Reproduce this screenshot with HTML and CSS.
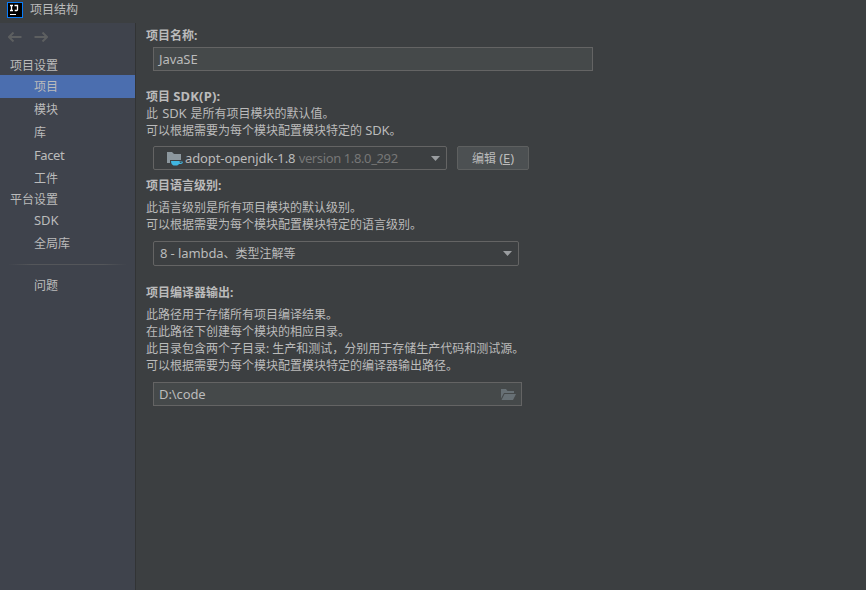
FILE: index.html
```html
<!DOCTYPE html>
<html lang="zh-CN">
  <head>
    <meta charset="UTF-8" />
    <meta name="viewport" content="width=device-width, initial-scale=1.0" />
    <title>项目结构</title>
    <link rel="stylesheet" href="styles.css">
  </head>
  <body>
    <header class="titlebar">
      <svg class="logo" width="16" height="16" viewBox="0 0 16 16">
        <rect x="0.5" y="0.5" width="15" height="15" fill="#000" stroke="#087cfa" />
        <path d="M3 3.500h3M4.500 3.500v5M3 8.500h3M7.500 3.500h3v4.200q0 .8-.8.8h-2" fill="none" stroke="#fff" stroke-width="1.300" />
        <path d="M3 12.500h6" stroke="#fff" stroke-width="1" />
      </svg>
      <span>项目结构</span>
    </header>

    <div class="window">
      <nav class="sidebar">
        <div class="history">
          <svg width="14" height="10" viewBox="0 0 14 10"><path d="M13.500 5H1.500M5.500 .5L1 5l4.500 4.500" /></svg>
          <svg width="14" height="10" viewBox="0 0 14 10"><path d="M.5 5h12M8.500 .5L13 5 8.500 9.500" /></svg>
        </div>
        <div class="group">项目设置</div>
        <a class="item selected">项目</a>
        <a class="item">模块</a>
        <a class="item">库</a>
        <a class="item"><span class="en facet">Facet</span></a>
        <a class="item">工件</a>
        <div class="group">平台设置</div>
        <a class="item"><span class="en">SDK</span></a>
        <a class="item">全局库</a>
        <div class="separator"></div>
        <a class="item">问题</a>
      </nav>

      <main class="content">
        <section class="block name">
          <h2>项目名称:</h2>
          <div class="field project-name"><span class="en">JavaSE</span></div>
        </section>

        <section class="block sdk">
          <h2>项目 <span class="en">SDK(P):</span></h2>
          <p>此 <span class="en sdk-word">SDK</span> 是所有项目模块的默认值。</p>
          <p>可以根据需要为每个模块配置模块特定的 <span class="en">SDK</span>。</p>
          <div class="row">
            <div class="combo sdk-combo">
              <svg class="folder" width="16" height="14" viewBox="0 0 16 14">
                <path d="M0 0h5l2 2h7v6H3v3H0z" fill="#8c979e" />
                <path d="M4 9h8.500v.5H15q1 0 .8 1-.3 1.500-3.800 1.500-.7 1-2 1.500H6.500Q4 12.500 4 9z" fill="#40b6e0" />
                <path d="M12.800 10.500h1.700" stroke="#3c3f41" stroke-width=".8" />
              </svg>
              <span class="en">adopt-openjdk-1.8 <span class="version">version 1.8.0_292</span></span>
              <svg class="arrow" width="9" height="5" viewBox="0 0 9 5"><path d="M0 0h9L4.500 5z" /></svg>
            </div>
            <button class="edit">编辑 <span class="en">(<u>E</u>)</span></button>
          </div>
        </section>

        <section class="block level">
          <h2>项目语言级别:</h2>
          <p>此语言级别是所有项目模块的默认级别。</p>
          <p>可以根据需要为每个模块配置模块特定的语言级别。</p>
          <div class="combo level-combo">
            <span><span class="en">8 - lambda</span>、类型注解等</span>
            <svg class="arrow" width="9" height="5" viewBox="0 0 9 5"><path d="M0 0h9L4.500 5z" /></svg>
          </div>
        </section>

        <section class="block output">
          <h2>项目编译器输出:</h2>
          <p>此路径用于存储所有项目编译结果。</p>
          <p>在此路径下创建每个模块的相应目录。</p>
          <p>此目录包含两个子目录: 生产和测试，分别用于存储生产代码和测试源。</p>
          <p>可以根据需要为每个模块配置模块特定的编译器输出路径。</p>
          <div class="field path">
            <span class="en">D:\code</span>
            <svg width="15" height="11" viewBox="0 0 15 11">
              <path d="M0 0h5l1.500 2H13v2H3L0 9.500zM3.500 5H15l-3 6H.5z" fill="#677075" />
            </svg>
          </div>
        </section>
      </main>
    </div>
  </body>
</html>
```

FILE: styles.css
```css
* {
  box-sizing: border-box;
}

body {
  margin: 0;
  height: 100vh;
  display: flex;
  flex-direction: column;
  overflow: hidden;
  background: #3c3f41;
  color: #bbbbbb;
  font-family: "Noto Sans", "Noto Sans CJK SC", sans-serif;
  font-size: 12px;
  line-height: 17px;
}

.en {
  font-size: 13px;
  letter-spacing: -0.1px;
}

.titlebar {
  height: 23px;
  padding: 1px 7px 5px;
  display: flex;
  align-items: center;
  gap: 7px;
}

.window {
  flex: 1;
  display: flex;
}

/* sidebar */
.sidebar {
  width: 136px;
  background: #3f434c;
  border-right: 1px solid #323435;
}

.history {
  height: 34px;
  padding: 9px 8px 0;
  display: flex;
  gap: 12px;
}

.history path {
  fill: none;
  stroke: #5d5f60;
  stroke-width: 2;
}

.group {
  height: 19px;
  padding-left: 10px;
  line-height: 20px;
}

.history + .group {
  height: 18px;
  line-height: 17px;
}

.item {
  display: block;
  height: 23px;
  padding-left: 34px;
  line-height: 23px;
}

.facet {
  letter-spacing: -0.4px;
}

.selected {
  background: #4b6eaf;
}

.separator {
  height: 1px;
  margin: 9px 8px;
  background: linear-gradient(90deg, transparent, #54565a 20%, #54565a 80%, transparent);
}

/* project settings */
.content {
  flex: 1;
  padding: 4px 0 0 10px;
}

h2,
p {
  margin: 0;
  height: 17px;
  font-size: 12px;
  font-weight: normal;
  line-height: 17px;
  white-space: nowrap;
}

h2 {
  font-weight: bold;
}

h2 .en {
  letter-spacing: 0.2px;
}

.sdk-word {
  margin: 0 1px;
}

.field,
.combo {
  height: 24px;
  margin-left: 7px;
  border: 1px solid #646464;
  display: flex;
  align-items: center;
  justify-content: space-between;
}

.field {
  padding: 0 5px;
  background: #45494a;
}

.combo {
  padding: 0 6px;
  border-radius: 2px;
}

.arrow {
  fill: #9a9da0;
}

.project-name {
  width: 440px;
  margin-top: 3px;
}

.sdk {
  margin-top: 17px;
}

.row {
  margin-top: 7px;
  display: flex;
  gap: 10px;
}

.sdk-combo {
  width: 294px;
}

.folder {
  margin: 2px 2px 0 7px;
}

.sdk-combo .arrow {
  margin-left: auto;
}

.version {
  color: #777777;
  letter-spacing: -0.38px;
}

.edit {
  width: 72px;
  height: 24px;
  padding: 0;
  border: 1px solid #5e6060;
  border-radius: 2px;
  background: #4c5052;
  color: inherit;
  font: inherit;
}

.level {
  margin-top: 7px;
}

.level h2,
.output h2 {
  margin-bottom: 5px;
}

.level-combo {
  width: 366px;
  height: 25px;
  margin-top: 8px;
}

.output {
  margin-top: 18px;
}

.path {
  width: 369px;
  margin-top: 8px;
}
```
